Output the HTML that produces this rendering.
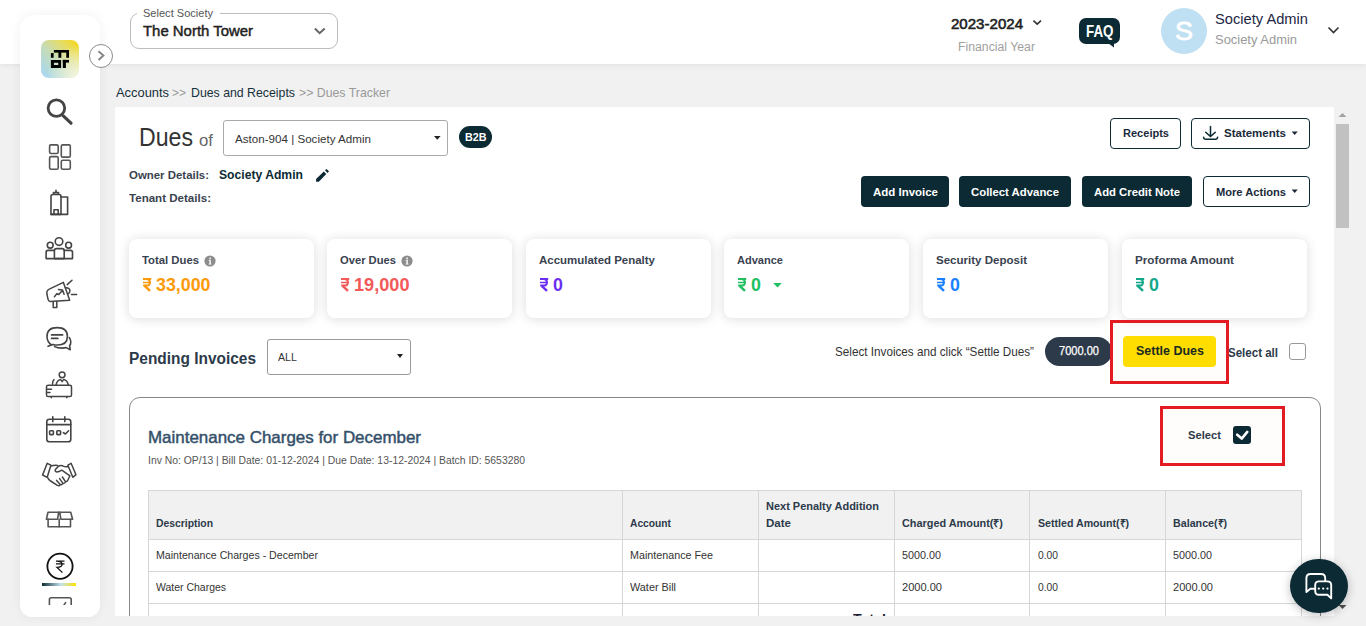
<!DOCTYPE html>
<html><head><meta charset="utf-8"><title>Dues Tracker</title>
<style>
html,body{margin:0;padding:0;width:1366px;height:626px;overflow:hidden;background:#f1f1f1;font-family:"Liberation Sans",sans-serif;}
.t{position:absolute;white-space:nowrap;line-height:1;transform-origin:0 0;}
</style></head><body>
<div style="position:absolute;left:0;top:0;width:1366px;height:64px;background:#fff;box-shadow:0 1px 6px rgba(0,0,0,0.07);"></div>
<div style="position:absolute;left:130px;top:13px;width:206px;height:34px;border:1px solid #bdbdbd;border-radius:9px;"></div>
<div style="position:absolute;left:137px;top:8px;width:83px;height:10px;background:#fff;"></div>
<span class="t" id="selsoc" style="left:143px;top:8.15px;font-size:11px;font-weight:400;color:#555;font-family:'Liberation Sans',sans-serif;transform:scaleX(1.0043);">Select Society</span>
<span class="t" id="northtower" style="left:143px;top:23.68px;font-size:14.5px;font-weight:400;color:#222;font-family:'Liberation Sans',sans-serif;transform:scaleX(1.0288);-webkit-text-stroke:0.45px #222;">The North Tower</span>
<svg style="position:absolute;left:313px;top:27px;" width="14" height="9" viewBox="0 0 14 9"><path d="M1.9 1.5 L6.6 6.2 L11.7 1.5" fill="none" stroke="#666" stroke-width="2"/></svg>
<span class="t" id="fy" style="left:951px;top:17.10px;font-size:14px;font-weight:400;color:#222;font-family:'Liberation Sans',sans-serif;transform:scaleX(1.0754);-webkit-text-stroke:0.55px #222;">2023-2024</span>
<svg style="position:absolute;left:1032px;top:19px;" width="11" height="8" viewBox="0 0 11 8"><path d="M1.4 1.6 L5.2 5.2 L9 1.6" fill="none" stroke="#333" stroke-width="1.6"/></svg>
<span class="t" id="fylbl" style="left:958px;top:40.58px;font-size:12.5px;font-weight:400;color:#a0a0a0;font-family:'Liberation Sans',sans-serif;transform:scaleX(0.9805);">Financial Year</span>
<div style="position:absolute;left:1079px;top:18px;width:41px;height:26px;background:#0b2a33;border-radius:7px;"></div>
<svg style="position:absolute;left:1104px;top:40px;" width="11" height="8" viewBox="0 0 11 8"><path d="M0 0 L10 0 L10 7.5 Z" fill="#0b2a33"/></svg>
<span class="t" id="faq" style="left:1085.5px;top:22.77px;font-size:16.5px;font-weight:700;color:#fff;font-family:'Liberation Sans',sans-serif;transform:scaleX(0.8107);">FAQ</span>
<div style="position:absolute;left:1161px;top:8px;width:46px;height:46px;border-radius:50%;background:#bfe0f2;"></div>
<span class="t" id="avS" style="left:1175px;top:19.32px;font-size:25.5px;font-weight:400;color:#fff;font-family:'Liberation Sans',sans-serif;transform:scaleX(1.0579);-webkit-text-stroke:0.8px #fff;">S</span>
<span class="t" id="uname" style="left:1215px;top:11.98px;font-size:14.5px;font-weight:400;color:#1d2744;font-family:'Liberation Sans',sans-serif;transform:scaleX(1.0121);">Society Admin</span>
<span class="t" id="urole" style="left:1215px;top:33.15px;font-size:13px;font-weight:400;color:#9a9a9a;font-family:'Liberation Sans',sans-serif;transform:scaleX(0.9954);">Society Admin</span>
<svg style="position:absolute;left:1327px;top:26px;" width="13" height="9" viewBox="0 0 13 9"><path d="M1.5 1.5 L6.5 6.5 L11.5 1.5" fill="none" stroke="#333" stroke-width="1.6"/></svg>
<div style="position:absolute;left:20px;top:15px;width:80px;height:602px;background:#fff;border-radius:14px;box-shadow:0 0 12px rgba(0,0,0,0.06);"></div>
<div style="position:absolute;left:41px;top:40px;width:38px;height:38px;border-radius:8px;background:radial-gradient(circle at 100% 100%,rgba(250,250,232,0.95) 0%,rgba(250,250,232,0) 62%),linear-gradient(45deg,#a2d6fa 0%,#c6dcb8 45%,#e2dc70 70%,#f8d810 100%);"></div>
<svg style="position:absolute;left:36px;top:35px;" width="48" height="48" viewBox="0 0 48 48"><g fill="#000"><rect x="17.9" y="15" width="15.1" height="2.6"/><path d="M15.5 17.9 H17.6 V22.8 H14.9 V18.5 Z"/><rect x="22.4" y="15" width="2.9" height="7.8"/><rect x="30.3" y="15" width="2.7" height="7.8"/><path fill-rule="evenodd" d="M14.9 24.9 H25.1 V33 H14.9 Z M17.9 27.8 V30 H22.3 V27.8 Z"/><rect x="26.8" y="24.9" width="3.1" height="8.1"/><rect x="26.8" y="24.9" width="6.2" height="2.7"/></g></svg>
<svg style="position:absolute;left:0px;top:0px;" width="100" height="626" viewBox="0 0 100 626"><g fill="none" stroke="#444" stroke-linecap="round" stroke-linejoin="round">
<circle cx="56.4" cy="108.1" r="8.3" stroke-width="2.8"/><path d="M63 115.6 L71 123.2" stroke-width="3.2"/>
<g stroke="#555" stroke-width="1.6"><rect x="49.6" y="144.9" width="8.6" height="8.6" rx="1.4"/><rect x="61.3" y="144.9" width="9" height="12.2" rx="1.4"/><rect x="49.6" y="156.6" width="8.6" height="12.6" rx="1.4"/><rect x="61.3" y="160.3" width="9" height="8.9" rx="1.4"/></g>
<g stroke-width="1.6"><path d="M51 214.4 V196.5 Q51 194.5 53 194.5 H59 Q61 194.5 61 196.5 V214.4 Z"/><path d="M53.5 194.3 V192.6 H58.5 V194.3 M56 192.4 V190.3"/><path d="M61 197 H67.6 V214.4 H51"/><path d="M54 214.3 V209.8 H58.2 V214.3"/></g>
<g stroke-width="1.6"><circle cx="59" cy="241.6" r="3.8"/><circle cx="50.2" cy="245.2" r="2.9"/><circle cx="68.6" cy="245.2" r="2.9"/><path d="M54.4 258.6 V250.6 Q54.4 248.6 56.4 248.6 H62.2 Q64.2 248.6 64.2 250.6 V258.6 Z"/><path d="M54.4 250.4 H48 Q46.1 250.4 46.1 252.4 V258.6 H72.5 V252.4 Q72.5 250.4 70.5 250.4 H64.2"/></g>
<g stroke-width="1.5"><path d="M50.2 301.6 Q48.4 301.2 48 299.2 L46.9 294 Q46.3 290.2 49.8 288.9 L63.4 282.4 L69.7 300.2 Z"/><path d="M65.4 287.7 Q69.6 287.4 69.9 290.6 Q70 293 68.2 293.8"/><path d="M53.2 302 V307.4 H56.8 V301.6"/><path d="M54.4 296.8 L56.9 293.6 L58.8 294.6 L62.4 290.4 M58.4 289.4 L62.4 289.9 L64.1 294.2"/><path d="M67.2 284.6 L72 280.2 M71.4 294.4 H76.6"/></g>
<g stroke-width="1.6"><path d="M51.5 345 Q47 341.5 47 336.4 Q47 327.6 57.2 327.6 Q67.4 327.6 67.4 336.4 Q67.4 345 57.2 345 Q55 345 53 344.4 L48 346.3 Z"/><path d="M51.6 334.8 H62.6 M51.6 338.4 H57.8" stroke-width="1.8"/><path d="M69.2 337.6 Q70.8 339.6 70.8 342 Q70.8 344.6 69.6 345.6 L70.2 349.8 L66.3 347.6 Q64.5 348.1 62.2 348.1 Q57.4 348.1 54.6 346.6"/></g>
<g stroke-width="1.5"><circle cx="62.1" cy="374.8" r="2.9"/><path d="M56 385 Q57 380 60.5 379.4 L62.1 381.6 L63.8 379.4 Q67.4 380 68.3 385"/><path d="M52.5 384.2 Q52.4 380.9 54 379.6"/><rect x="46.5" y="385.2" width="25" height="11.3" rx="1.6"/><path d="M47 389.2 H51.5 M47 392.4 H50" /><path d="M51.3 396.8 V397.8 M66.8 396.8 V397.8"/></g>
<g stroke-width="1.6"><rect x="46.8" y="419.2" width="24" height="22.6" rx="2.6"/><path d="M46.8 424.6 H70.8" /><path d="M52.8 416.8 V421.6 M64.8 416.8 V421.6"/><rect x="49.6" y="430.8" width="3.8" height="3.8" rx="0.8"/><rect x="56.8" y="430.8" width="3.8" height="3.8" rx="0.8"/><path d="M63.4 432.6 L65.4 434 L68.6 430.8"/></g>
<g stroke-width="1.5"><path d="M47.2 463.3 L50.9 465.2 L47.2 477.3 L42.6 475 Z"/><path d="M71.1 463.3 L67.9 465.2 L72.8 477.3 L76 474.7 Z"/><path d="M50.9 465.9 Q54.5 465 57.6 465.4"/><path d="M68 466.6 Q65.2 467.2 62.6 465.8 Q60.4 465 58.2 466.4 L55.4 469.6 Q54.6 471.6 56.8 472 Q58.8 472 61.8 470.2 L69.6 475.6"/><path d="M47.6 477.4 Q48.4 479.6 50.6 481 L57.4 485.4 Q59.2 486.4 60.2 484.6 L56.6 480.4 M60.2 484.6 Q62 485.2 63 483.4 L59.6 478.6 M63 483.4 Q64.8 483.6 65.6 481.8 L62.4 477 M65.6 481.8 Q67.2 481.8 67.8 480.2 L69.8 476"/></g>
<g stroke="#555" stroke-width="1.6"><path d="M48 512.3 H58.6 L57.6 519.2 H46.4 Z"/><path d="M59.8 512.3 H70.7 L72.6 519.2 H60.8 Z"/><path d="M58.6 512.3 L59.2 514 L59.8 512.3" fill="#555"/><path d="M48.1 519.2 V526.8 H70.5 V519.2"/><path d="M59.2 519.2 V526.8"/></g>
<circle cx="60" cy="566.2" r="12.6" stroke="#111" stroke-width="1.8"/>
<path d="M49.4 605 V599.6 Q49.4 597.8 51.2 597.8 H69.4 Q71.2 597.8 71.2 599.6 V605 M64 605 L65.6 602.6" stroke="#555" stroke-width="1.6"/>
</g>
<path d="M56 561.2 H64.5 M56 563.8 H64.5 M57 561.2 Q62 561.2 62 564.6 Q62 567.4 57 567.4 L62.5 572.6" fill="none" stroke="#111" stroke-width="1.3"/>
<defs><linearGradient id="gbar" x1="0" x2="1"><stop offset="0" stop-color="#0b2a33"/><stop offset="0.55" stop-color="#c3e2ef"/><stop offset="1" stop-color="#ffe000"/></linearGradient></defs>
<rect x="42" y="583" width="34" height="3" fill="url(#gbar)"/>
</svg>
<div style="position:absolute;left:20px;top:605px;width:80px;height:12px;background:#fff;border-radius:0 0 14px 14px;"></div>
<div style="position:absolute;left:89px;top:44px;width:22px;height:22px;border:1px solid #8a8a8a;border-radius:50%;background:#fff;"></div>
<svg style="position:absolute;left:96px;top:49px;" width="10" height="13" viewBox="0 0 10 13"><path d="M2.5 2.2 L7.4 6.6 L2.5 11" fill="none" stroke="#888" stroke-width="2"/></svg>
<span class="t" id="bc1" style="left:116px;top:85.95px;font-size:13px;font-weight:400;color:#16303b;font-family:'Liberation Sans',sans-serif;transform:scaleX(0.9909);">Accounts</span>
<span class="t" id="bc2" style="left:172px;top:85.95px;font-size:13px;font-weight:400;color:#999;font-family:'Liberation Sans',sans-serif;transform:scaleX(0.9218);">&gt;&gt;</span>
<span class="t" id="bc3" style="left:191px;top:85.95px;font-size:13px;font-weight:400;color:#16303b;font-family:'Liberation Sans',sans-serif;transform:scaleX(0.9468);">Dues and Receipts</span>
<span class="t" id="bc4" style="left:299px;top:85.95px;font-size:13px;font-weight:400;color:#999;font-family:'Liberation Sans',sans-serif;transform:scaleX(0.9468);">&gt;&gt; Dues Tracker</span>
<div style="position:absolute;left:115px;top:107px;width:1219px;height:509px;background:#fff;"></div>
<div style="position:absolute;left:1334px;top:107px;width:16px;height:509px;background:#f1f1f1;"></div>
<div style="position:absolute;left:1336px;top:124px;width:13px;height:104px;background:#c1c1c1;"></div>
<svg style="position:absolute;left:1338px;top:112px;" width="9" height="6" viewBox="0 0 9 6"><path d="M0.5 5 L4.5 1 L8.5 5 Z" fill="#a3a3a3"/></svg>
<svg style="position:absolute;left:1338px;top:604px;" width="9" height="6" viewBox="0 0 9 6"><path d="M0.5 1 L4.5 5 L8.5 1 Z" fill="#505050"/></svg>
<span class="t" id="dues" style="left:139px;top:124.40px;font-size:26px;font-weight:400;color:#333;font-family:'Liberation Sans',sans-serif;transform:scaleX(0.8896);">Dues</span>
<span class="t" id="of" style="left:199px;top:132.05px;font-size:17px;font-weight:400;color:#666;font-family:'Liberation Sans',sans-serif;transform:scaleX(0.9868);">of</span>
<div style="position:absolute;left:223px;top:120px;width:223px;height:34px;border:1px solid #aaa;border-radius:3px;"></div>
<span class="t" id="aston" style="left:235px;top:134.28px;font-size:11.2px;font-weight:400;color:#333;font-family:'Liberation Sans',sans-serif;transform:scaleX(1.0380);">Aston-904 | Society Admin</span>
<svg style="position:absolute;left:433.6px;top:136px;" width="8" height="5" viewBox="0 0 8 5"><path d="M0 0 L6.6 0 L3.3 3.8 Z" fill="#222"/></svg>
<div style="position:absolute;left:459px;top:126px;width:33px;height:22px;border-radius:11px;background:#0b2a33;"></div>
<span class="t" id="b2b" style="left:465px;top:132.22px;font-size:11.5px;font-weight:700;color:#fff;font-family:'Liberation Sans',sans-serif;transform:scaleX(0.9341);">B2B</span>
<span class="t" id="owner" style="left:129px;top:168.94px;font-size:11.6px;font-weight:700;color:#3a4250;font-family:'Liberation Sans',sans-serif;transform:scaleX(0.9854);">Owner Details:</span>
<span class="t" id="ownername" style="left:219px;top:167.53px;font-size:13.5px;font-weight:700;color:#0b2a33;font-family:'Liberation Sans',sans-serif;transform:scaleX(0.9005);">Society Admin</span>
<svg style="position:absolute;left:308px;top:162px;" width="30" height="26" viewBox="0 0 30 26"><path d="M8.1 17 L15.8 9.6 L18.3 12 L10.8 19.7 L8.1 19.7 Z M17 8.3 L18.5 6.9 L21 9.3 L19.5 10.9 Z" fill="#0b2a33"/></svg>
<span class="t" id="tenant" style="left:129px;top:191.94px;font-size:11.6px;font-weight:700;color:#3a4250;font-family:'Liberation Sans',sans-serif;transform:scaleX(0.9970);">Tenant Details:</span>
<div style="position:absolute;left:1110px;top:118px;width:69px;height:29px;border:1px solid #0b2a33;border-radius:4px;"></div>
<span class="t" id="receipts" style="left:1123px;top:127.14px;font-size:11.6px;font-weight:700;color:#1a2a3a;font-family:'Liberation Sans',sans-serif;transform:scaleX(0.9518);">Receipts</span>
<div style="position:absolute;left:1191px;top:118px;width:117px;height:29px;border:1px solid #0b2a33;border-radius:4px;"></div>
<svg style="position:absolute;left:1196px;top:120px;" width="30" height="26" viewBox="0 0 30 26"><path d="M14.5 6.4 V16.2 M9.7 12.2 L14.5 16.6 L19.3 12.2 M7.6 17.2 Q7.8 19.3 9.6 19.3 H19.6 Q21.4 19.3 21.6 17.2" fill="none" stroke="#0b2a33" stroke-width="1.5" stroke-linecap="round"/></svg>
<span class="t" id="statements" style="left:1224px;top:127.14px;font-size:11.6px;font-weight:700;color:#1a2a3a;font-family:'Liberation Sans',sans-serif;transform:scaleX(0.9920);">Statements</span>
<svg style="position:absolute;left:1291px;top:131px;" width="8" height="5" viewBox="0 0 8 5"><path d="M0.6 0.6 L6.8 0.6 L3.7 3.9 Z" fill="#1a2a3a"/></svg>
<div style="position:absolute;left:861px;top:176px;width:88px;height:31px;background:#0b2a33;border-radius:4px;"></div>
<span class="t" id="addinv" style="left:872.5px;top:186.14px;font-size:11.6px;font-weight:700;color:#fff;font-family:'Liberation Sans',sans-serif;transform:scaleX(0.9891);">Add Invoice</span>
<div style="position:absolute;left:959px;top:176px;width:112px;height:31px;background:#0b2a33;border-radius:4px;"></div>
<span class="t" id="collect" style="left:971.0px;top:186.14px;font-size:11.6px;font-weight:700;color:#fff;font-family:'Liberation Sans',sans-serif;transform:scaleX(0.9802);">Collect Advance</span>
<div style="position:absolute;left:1082px;top:176px;width:110px;height:31px;background:#0b2a33;border-radius:4px;"></div>
<span class="t" id="credit" style="left:1094.0px;top:186.14px;font-size:11.6px;font-weight:700;color:#fff;font-family:'Liberation Sans',sans-serif;transform:scaleX(0.9745);">Add Credit Note</span>
<div style="position:absolute;left:1203px;top:176px;width:105px;height:29px;border:1px solid #0b2a33;border-radius:4px;"></div>
<span class="t" id="moreact" style="left:1216px;top:186.14px;font-size:11.6px;font-weight:700;color:#1a2a3a;font-family:'Liberation Sans',sans-serif;transform:scaleX(0.9587);">More Actions</span>
<svg style="position:absolute;left:1291px;top:189px;" width="8" height="5" viewBox="0 0 8 5"><path d="M0.6 0.6 L6.8 0.6 L3.7 3.9 Z" fill="#1a2a3a"/></svg>
<div style="position:absolute;left:129px;top:239px;width:185px;height:79px;background:#fff;border-radius:8px;box-shadow:0 1px 12px rgba(0,0,0,0.14);"></div>
<span class="t" id="card0l" style="left:142px;top:255.08px;font-size:11.2px;font-weight:700;color:#3a4250;font-family:'Liberation Sans',sans-serif;transform:scaleX(1.0114);">Total Dues</span>
<svg style="position:absolute;left:141.6px;top:277.2px;" width="12" height="16" viewBox="0 0 12 16"><g transform="translate(1,1) scale(1.0)"><path d="M0 0 H8.2 V1.9 H0 Z M0 3.7 H8.2 L7.7 5.2 H0 Z" fill="#fc9a0a"/><path d="M0.3 0.95 H3.4 Q6.9 0.95 6.9 4.4 Q6.9 7.6 3.2 7.6 H0.2" fill="none" stroke="#fc9a0a" stroke-width="2"/><path d="M1.6 7.9 L7 12.9" fill="none" stroke="#fc9a0a" stroke-width="2.5"/></g></svg>
<span class="t" id="card0v" style="left:156px;top:275.90px;font-size:18px;font-weight:700;color:#fc9a0a;font-family:'Liberation Sans',sans-serif;transform:scaleX(0.9898);">33,000</span>
<svg style="position:absolute;left:203.6px;top:254.6px;" width="12" height="12" viewBox="0 0 12 12"><circle cx="6" cy="6" r="5.6" fill="#8c8c8c"/><path d="M4.6 4.8 H6.8 V8.8 H7.6 V9.6 H4.6 V8.8 H5.4 V5.6 H4.6 Z" fill="#fff"/><rect x="5.3" y="2.4" width="1.6" height="1.6" rx="0.4" fill="#fff"/></svg>
<div style="position:absolute;left:327px;top:239px;width:185px;height:79px;background:#fff;border-radius:8px;box-shadow:0 1px 12px rgba(0,0,0,0.14);"></div>
<span class="t" id="card1l" style="left:340px;top:255.08px;font-size:11.2px;font-weight:700;color:#3a4250;font-family:'Liberation Sans',sans-serif;">Over Dues</span>
<svg style="position:absolute;left:339.6px;top:277.2px;" width="12" height="16" viewBox="0 0 12 16"><g transform="translate(1,1) scale(1.0)"><path d="M0 0 H8.2 V1.9 H0 Z M0 3.7 H8.2 L7.7 5.2 H0 Z" fill="#f25a5a"/><path d="M0.3 0.95 H3.4 Q6.9 0.95 6.9 4.4 Q6.9 7.6 3.2 7.6 H0.2" fill="none" stroke="#f25a5a" stroke-width="2"/><path d="M1.6 7.9 L7 12.9" fill="none" stroke="#f25a5a" stroke-width="2.5"/></g></svg>
<span class="t" id="card1v" style="left:354px;top:275.90px;font-size:18px;font-weight:700;color:#f25a5a;font-family:'Liberation Sans',sans-serif;transform:scaleX(1.0079);">19,000</span>
<svg style="position:absolute;left:400.6px;top:254.6px;" width="12" height="12" viewBox="0 0 12 12"><circle cx="6" cy="6" r="5.6" fill="#8c8c8c"/><path d="M4.6 4.8 H6.8 V8.8 H7.6 V9.6 H4.6 V8.8 H5.4 V5.6 H4.6 Z" fill="#fff"/><rect x="5.3" y="2.4" width="1.6" height="1.6" rx="0.4" fill="#fff"/></svg>
<div style="position:absolute;left:526px;top:239px;width:185px;height:79px;background:#fff;border-radius:8px;box-shadow:0 1px 12px rgba(0,0,0,0.14);"></div>
<span class="t" id="card2l" style="left:539px;top:255.08px;font-size:11.2px;font-weight:700;color:#3a4250;font-family:'Liberation Sans',sans-serif;transform:scaleX(1.0251);">Accumulated Penalty</span>
<svg style="position:absolute;left:538.6px;top:277.2px;" width="12" height="16" viewBox="0 0 12 16"><g transform="translate(1,1) scale(1.0)"><path d="M0 0 H8.2 V1.9 H0 Z M0 3.7 H8.2 L7.7 5.2 H0 Z" fill="#6b2ef2"/><path d="M0.3 0.95 H3.4 Q6.9 0.95 6.9 4.4 Q6.9 7.6 3.2 7.6 H0.2" fill="none" stroke="#6b2ef2" stroke-width="2"/><path d="M1.6 7.9 L7 12.9" fill="none" stroke="#6b2ef2" stroke-width="2.5"/></g></svg>
<span class="t" id="card2v" style="left:553px;top:275.90px;font-size:18px;font-weight:700;color:#6b2ef2;font-family:'Liberation Sans',sans-serif;transform:scaleX(0.9885);">0</span>
<div style="position:absolute;left:724px;top:239px;width:185px;height:79px;background:#fff;border-radius:8px;box-shadow:0 1px 12px rgba(0,0,0,0.14);"></div>
<span class="t" id="card3l" style="left:737px;top:255.08px;font-size:11.2px;font-weight:700;color:#3a4250;font-family:'Liberation Sans',sans-serif;transform:scaleX(0.9863);">Advance</span>
<svg style="position:absolute;left:736.6px;top:277.2px;" width="12" height="16" viewBox="0 0 12 16"><g transform="translate(1,1) scale(1.0)"><path d="M0 0 H8.2 V1.9 H0 Z M0 3.7 H8.2 L7.7 5.2 H0 Z" fill="#21be62"/><path d="M0.3 0.95 H3.4 Q6.9 0.95 6.9 4.4 Q6.9 7.6 3.2 7.6 H0.2" fill="none" stroke="#21be62" stroke-width="2"/><path d="M1.6 7.9 L7 12.9" fill="none" stroke="#21be62" stroke-width="2.5"/></g></svg>
<span class="t" id="card3v" style="left:751px;top:275.90px;font-size:18px;font-weight:700;color:#21be62;font-family:'Liberation Sans',sans-serif;transform:scaleX(0.9885);">0</span>
<div style="position:absolute;left:923px;top:239px;width:185px;height:79px;background:#fff;border-radius:8px;box-shadow:0 1px 12px rgba(0,0,0,0.14);"></div>
<span class="t" id="card4l" style="left:936px;top:255.08px;font-size:11.2px;font-weight:700;color:#3a4250;font-family:'Liberation Sans',sans-serif;transform:scaleX(1.0306);">Security Deposit</span>
<svg style="position:absolute;left:935.6px;top:277.2px;" width="12" height="16" viewBox="0 0 12 16"><g transform="translate(1,1) scale(1.0)"><path d="M0 0 H8.2 V1.9 H0 Z M0 3.7 H8.2 L7.7 5.2 H0 Z" fill="#1a80ff"/><path d="M0.3 0.95 H3.4 Q6.9 0.95 6.9 4.4 Q6.9 7.6 3.2 7.6 H0.2" fill="none" stroke="#1a80ff" stroke-width="2"/><path d="M1.6 7.9 L7 12.9" fill="none" stroke="#1a80ff" stroke-width="2.5"/></g></svg>
<span class="t" id="card4v" style="left:950px;top:275.90px;font-size:18px;font-weight:700;color:#1a80ff;font-family:'Liberation Sans',sans-serif;transform:scaleX(0.9885);">0</span>
<div style="position:absolute;left:1122px;top:239px;width:185px;height:79px;background:#fff;border-radius:8px;box-shadow:0 1px 12px rgba(0,0,0,0.14);"></div>
<span class="t" id="card5l" style="left:1135px;top:255.08px;font-size:11.2px;font-weight:700;color:#3a4250;font-family:'Liberation Sans',sans-serif;transform:scaleX(1.0455);">Proforma Amount</span>
<svg style="position:absolute;left:1134.6px;top:277.2px;" width="12" height="16" viewBox="0 0 12 16"><g transform="translate(1,1) scale(1.0)"><path d="M0 0 H8.2 V1.9 H0 Z M0 3.7 H8.2 L7.7 5.2 H0 Z" fill="#13a88a"/><path d="M0.3 0.95 H3.4 Q6.9 0.95 6.9 4.4 Q6.9 7.6 3.2 7.6 H0.2" fill="none" stroke="#13a88a" stroke-width="2"/><path d="M1.6 7.9 L7 12.9" fill="none" stroke="#13a88a" stroke-width="2.5"/></g></svg>
<span class="t" id="card5v" style="left:1149px;top:275.90px;font-size:18px;font-weight:700;color:#13a88a;font-family:'Liberation Sans',sans-serif;transform:scaleX(0.9885);">0</span>
<svg style="position:absolute;left:773px;top:282.8px;" width="10" height="5" viewBox="0 0 10 5"><path d="M0.2 0 L8.8 0 L4.5 4.4 Z" fill="#21be62"/></svg>
<span class="t" id="pending" style="left:129px;top:351.00px;font-size:16px;font-weight:700;color:#2c3a4a;font-family:'Liberation Sans',sans-serif;transform:scaleX(0.9651);">Pending Invoices</span>
<div style="position:absolute;left:267px;top:339px;width:142px;height:34px;border:1px solid #999;border-radius:3px;"></div>
<span class="t" id="all" style="left:278px;top:352.08px;font-size:11.2px;font-weight:400;color:#333;font-family:'Liberation Sans',sans-serif;transform:scaleX(0.9444);">ALL</span>
<svg style="position:absolute;left:397px;top:354px;" width="7" height="5" viewBox="0 0 7 5"><path d="M0 0 L6 0 L3 4 Z" fill="#222"/></svg>
<span class="t" id="selinv" style="left:835px;top:346.23px;font-size:12.2px;font-weight:400;color:#333;font-family:'Liberation Sans',sans-serif;transform:scaleX(0.9600);">Select Invoices and click “Settle Dues”</span>
<div style="position:absolute;left:1045px;top:337px;width:67px;height:29px;border-radius:15px;background:#2d3a4a;"></div>
<span class="t" id="amt" style="left:1059px;top:345.00px;font-size:12px;font-weight:400;color:#fff;font-family:'Liberation Sans',sans-serif;transform:scaleX(0.9219);-webkit-text-stroke:0.25px #fff;">7000.00</span>
<div style="position:absolute;left:1110px;top:320px;width:113px;height:58px;border:3px solid #e31b23;background:rgba(255,0,0,0.012);"></div>
<div style="position:absolute;left:1123px;top:336px;width:93px;height:31px;background:#ffdd00;border-radius:4px;"></div>
<span class="t" id="settle" style="left:1136px;top:344.15px;font-size:13px;font-weight:700;color:#1a2a20;font-family:'Liberation Sans',sans-serif;transform:scaleX(0.9603);">Settle Dues</span>
<span class="t" id="selall" style="left:1228px;top:346.80px;font-size:12px;font-weight:700;color:#2c3a4a;font-family:'Liberation Sans',sans-serif;transform:scaleX(0.9610);">Select all</span>
<div style="position:absolute;left:1289px;top:343px;width:15px;height:15px;border:1px solid #999;border-radius:3px;background:#fff;"></div>
<div style="position:absolute;left:129px;top:397px;width:1190px;height:240px;border:1px solid #888;border-radius:11px;"></div>
<span class="t" id="mtitle" style="left:148px;top:429.46px;font-size:16.4px;font-weight:400;color:#34506a;font-family:'Liberation Sans',sans-serif;transform:scaleX(1.0333);-webkit-text-stroke:0.45px #34506a;">Maintenance Charges for December</span>
<span class="t" id="minfo" style="left:148px;top:454.71px;font-size:10.7px;font-weight:400;color:#555;font-family:'Liberation Sans',sans-serif;transform:scaleX(0.9717);">Inv No: OP/13 | Bill Date: 01-12-2024 | Due Date: 13-12-2024 | Batch ID: 5653280</span>
<div style="position:absolute;left:1160px;top:406px;width:119px;height:54px;border:3px solid #e31b23;background:rgba(255,0,0,0.012);"></div>
<span class="t" id="select" style="left:1188px;top:430.45px;font-size:11px;font-weight:700;color:#2c3a4a;font-family:'Liberation Sans',sans-serif;transform:scaleX(1.0178);">Select</span>
<div style="position:absolute;left:1233px;top:426px;width:18px;height:18px;background:#0b2a33;border-radius:3px;"></div>
<svg style="position:absolute;left:1233px;top:426px;" width="18" height="18" viewBox="0 0 18 18"><path d="M4.2 8.7 L8.7 12.6 L14.3 5.9" fill="none" stroke="#fff" stroke-width="2.6" stroke-linecap="round" stroke-linejoin="round"/></svg>
<div style="position:absolute;left:148px;top:490px;width:1153px;height:49px;background:#f1f1f1;"></div>
<div style="position:absolute;left:148px;top:490px;width:1153px;height:1px;background:#d6d6d6;"></div>
<div style="position:absolute;left:148px;top:539px;width:1153px;height:1px;background:#d6d6d6;"></div>
<div style="position:absolute;left:148px;top:571px;width:1153px;height:1px;background:#d6d6d6;"></div>
<div style="position:absolute;left:148px;top:603px;width:1153px;height:1px;background:#d6d6d6;"></div>
<div style="position:absolute;left:148px;top:640px;width:1153px;height:1px;background:#d6d6d6;"></div>
<div style="position:absolute;left:148px;top:490px;width:1px;height:150px;background:#d6d6d6;"></div>
<div style="position:absolute;left:622px;top:490px;width:1px;height:150px;background:#d6d6d6;"></div>
<div style="position:absolute;left:758px;top:490px;width:1px;height:150px;background:#d6d6d6;"></div>
<div style="position:absolute;left:894px;top:490px;width:1px;height:150px;background:#d6d6d6;"></div>
<div style="position:absolute;left:1029px;top:490px;width:1px;height:150px;background:#d6d6d6;"></div>
<div style="position:absolute;left:1165px;top:490px;width:1px;height:150px;background:#d6d6d6;"></div>
<div style="position:absolute;left:1301px;top:490px;width:1px;height:150px;background:#d6d6d6;"></div>
<span class="t" id="h0" style="left:156px;top:517.85px;font-size:11px;font-weight:700;color:#2c3a4a;font-family:'Liberation Sans',sans-serif;transform:scaleX(0.9419);">Description</span>
<span class="t" id="h1" style="left:630px;top:517.85px;font-size:11px;font-weight:700;color:#2c3a4a;font-family:'Liberation Sans',sans-serif;transform:scaleX(0.9318);">Account</span>
<span class="t" id="h2" style="left:902px;top:517.85px;font-size:11px;font-weight:700;color:#2c3a4a;font-family:'Liberation Sans',sans-serif;transform:scaleX(0.9888);">Charged Amount(₹)</span>
<span class="t" id="h3" style="left:1038px;top:517.85px;font-size:11px;font-weight:700;color:#2c3a4a;font-family:'Liberation Sans',sans-serif;transform:scaleX(0.9660);">Settled Amount(₹)</span>
<span class="t" id="h4" style="left:1173px;top:517.85px;font-size:11px;font-weight:700;color:#2c3a4a;font-family:'Liberation Sans',sans-serif;transform:scaleX(0.9724);">Balance(₹)</span>
<span class="t" id="hnp1" style="left:766px;top:501.05px;font-size:11px;font-weight:700;color:#2c3a4a;font-family:'Liberation Sans',sans-serif;transform:scaleX(0.9975);">Next Penalty Addition</span>
<span class="t" id="hnp2" style="left:766px;top:518.25px;font-size:11px;font-weight:700;color:#2c3a4a;font-family:'Liberation Sans',sans-serif;transform:scaleX(1.0485);">Date</span>
<span class="t" id="r10" style="left:156px;top:549.85px;font-size:11px;font-weight:400;color:#333;font-family:'Liberation Sans',sans-serif;transform:scaleX(0.9635);">Maintenance Charges - December</span>
<span class="t" id="r11" style="left:630px;top:549.85px;font-size:11px;font-weight:400;color:#333;font-family:'Liberation Sans',sans-serif;transform:scaleX(0.9765);">Maintenance Fee</span>
<span class="t" id="r12" style="left:902px;top:549.85px;font-size:11px;font-weight:400;color:#333;font-family:'Liberation Sans',sans-serif;transform:scaleX(0.9807);">5000.00</span>
<span class="t" id="r13" style="left:1038px;top:549.85px;font-size:11px;font-weight:400;color:#333;font-family:'Liberation Sans',sans-serif;transform:scaleX(0.9336);">0.00</span>
<span class="t" id="r14" style="left:1173px;top:549.85px;font-size:11px;font-weight:400;color:#333;font-family:'Liberation Sans',sans-serif;transform:scaleX(0.9807);">5000.00</span>
<span class="t" id="r20" style="left:156px;top:581.65px;font-size:11px;font-weight:400;color:#333;font-family:'Liberation Sans',sans-serif;transform:scaleX(0.9516);">Water Charges</span>
<span class="t" id="r21" style="left:630px;top:581.65px;font-size:11px;font-weight:400;color:#333;font-family:'Liberation Sans',sans-serif;transform:scaleX(0.9859);">Water Bill</span>
<span class="t" id="r22" style="left:902px;top:581.65px;font-size:11px;font-weight:400;color:#333;font-family:'Liberation Sans',sans-serif;transform:scaleX(1.0059);">2000.00</span>
<span class="t" id="r23" style="left:1038px;top:581.65px;font-size:11px;font-weight:400;color:#333;font-family:'Liberation Sans',sans-serif;transform:scaleX(0.9336);">0.00</span>
<span class="t" id="r24" style="left:1173px;top:581.65px;font-size:11px;font-weight:400;color:#333;font-family:'Liberation Sans',sans-serif;transform:scaleX(1.0059);">2000.00</span>
<span class="t" id="total" style="left:853px;top:611.55px;font-size:13px;font-weight:700;color:#1a2030;font-family:'Liberation Sans',sans-serif;transform:scaleX(1.0966);">Total</span>
<div style="position:absolute;left:101px;top:616px;width:1265px;height:10px;background:#f1f1f1;"></div>
<div style="position:absolute;left:1290px;top:558.5px;width:57.5px;height:54.5px;border-radius:50%;background:#0b2a33;box-shadow:0 2px 10px rgba(0,0,0,0.25);"></div>
<svg style="position:absolute;left:1285px;top:552px;" width="70" height="70" viewBox="0 0 70 70"><g fill="none" stroke="#fff" stroke-width="1.9" stroke-linejoin="round"><path d="M40.2 29.2 V26.2 Q40.2 22 36 22 H25.6 Q21.4 22 21.4 26.2 V40 L25.4 36.8 H30.2"/><path d="M34 29.4 H42.4 Q46.2 29.4 46.2 33.2 V46.4 L42.4 42.8 H34 Q30.2 42.8 30.2 39 V33.2 Q30.2 29.4 34 29.4 Z"/></g><g fill="#fff"><circle cx="33.8" cy="36.6" r="1.15"/><circle cx="38.2" cy="36.6" r="1.15"/><circle cx="42.5" cy="36.6" r="1.15"/></g></svg>
</body></html>
